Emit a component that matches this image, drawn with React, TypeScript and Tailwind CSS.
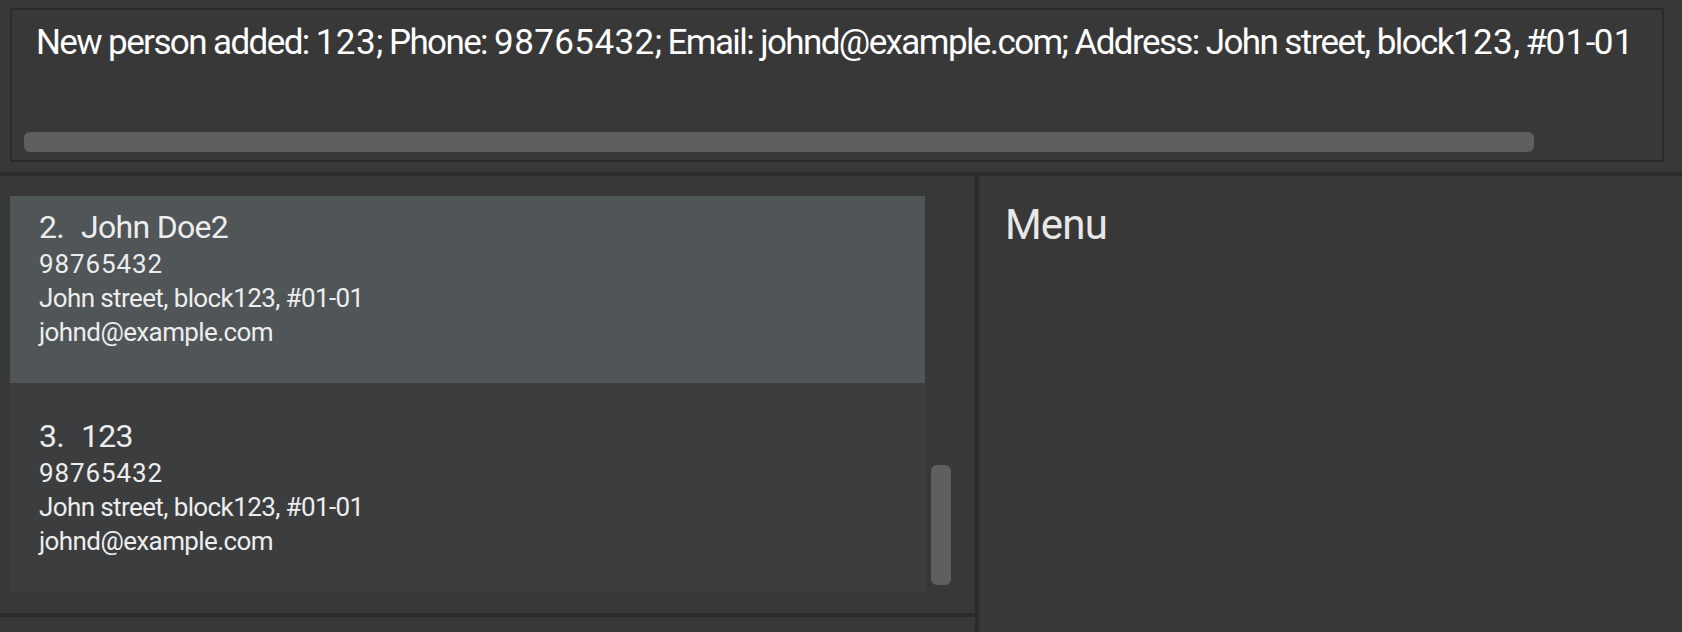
import React from 'react';

// Person cards shown in the list panel
const persons = [
  { index: 2, name: 'John Doe2', phone: '98765432', address: 'John street, block123, #01-01', email: 'johnd@example.com', selected: true },
  { index: 3, name: '123', phone: '98765432', address: 'John street, block123, #01-01', email: 'johnd@example.com', selected: false },
];

const feedback =
  'New person added: 123; Phone: 98765432; Email: johnd@example.com; Address: John street, block123, #01-01';

// digits in the source font run wider than letters, so give them their own spacing
function Spaced({ text }: { text: string }) {
  return (
    <>
      {text.split(/(\d+)/).map((part, i) =>
        /^\d+$/.test(part) ? (
          <span key={i} className="tracking-[0.4px]">
            {part}
          </span>
        ) : (
          <span key={i}>{part}</span>
        )
      )}
    </>
  );
}

function PersonCard({ person }: { person: (typeof persons)[number] }) {
  return (
    <div
      className={`pt-[33px] pb-[34px] pl-[29px] ${person.selected ? 'bg-[#505558]' : 'bg-[#3c3d3f]'}`}
    >
      <div className="flex text-[32px] leading-[40px] tracking-[-0.7px] text-[#ededed]">
        <span>{person.index}.</span>
        <span className="ml-[17px]">{person.name}</span>
      </div>
      <div className="text-[26px] leading-[34px] tracking-[-0.6px] text-[#ededed]">
        <div className="tracking-[0.9px]">{person.phone}</div>
        <div>{person.address}</div>
        <div>{person.email}</div>
      </div>
    </div>
  );
}

export default function App() {
  return (
    <div className="flex h-[632px] w-[1682px] flex-col overflow-hidden bg-[#383838] font-['Roboto',sans-serif]">
      {/* Result display */}
      <div className="h-[172px] shrink-0 pt-2 pl-[10px] pr-[18px]">
        <div className="flex h-[154px] flex-col border-2 border-[#2b2b2b]">
          <div className="whitespace-nowrap pl-6 pt-[13px] text-[35px] leading-[40px] tracking-[-1.6px] text-white">
            <Spaced text={feedback} />
          </div>
          <div className="mt-auto mb-2 ml-3 h-5 w-[1510px] rounded-[6px] bg-[#5f5f5f]" />
        </div>
      </div>
      <div className="h-1 shrink-0 bg-[#2b2b2b]" />

      <div className="flex min-h-0 flex-1">
        {/* Person list */}
        <div className="flex w-[975px] shrink-0 flex-col">
          <div className="flex h-[437px] shrink-0 pt-5 pl-[10px]">
            <div className="h-[397px] w-[915px] overflow-hidden">
              <div className="-mt-[22px]">
                {persons.map((p) => (
                  <PersonCard key={p.index} person={p} />
                ))}
              </div>
            </div>
            <div className="ml-[6px] pt-[269px]">
              <div className="h-[120px] w-5 rounded-[6px] bg-[#5f5f5f]" />
            </div>
          </div>
          <div className="h-1 shrink-0 bg-[#2b2b2b]" />
          <div className="flex-1" />
        </div>
        <div className="w-1 shrink-0 bg-[#2b2b2b]" />

        {/* Menu panel */}
        <div className="flex-1 pt-[25px] pl-[26px]">
          <div className="text-[42px] leading-[48px] tracking-[-0.8px] text-[#e8e8e8]">Menu</div>
        </div>
      </div>
    </div>
  );
}
